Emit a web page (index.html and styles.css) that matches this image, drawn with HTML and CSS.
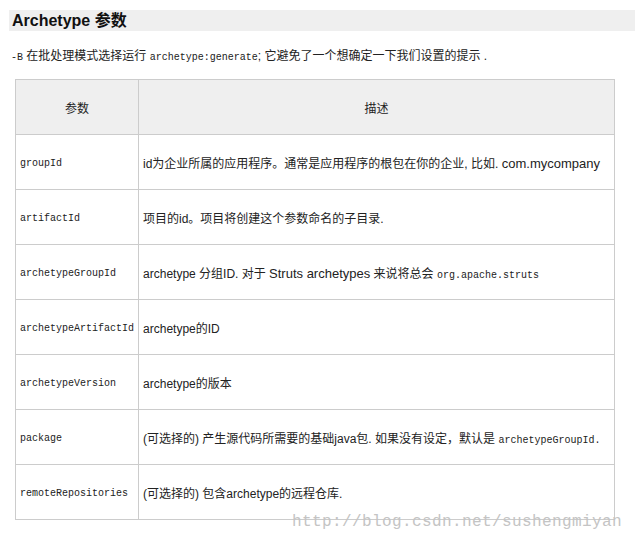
FILE: index.html
```html
<!DOCTYPE html>
<html lang="zh-CN">
<head>
    <meta charset="UTF-8">
    <title>Archetype 参数</title>
    <link rel="stylesheet" href="styles.css">
</head>
<body>
    <div class="page">
        <h3 class="section-title">Archetype 参数</h3>
        <p class="intro"><code>-B</code> 在批处理模式选择运行 <code>archetype:generate</code>; 它避免了一个想确定一下我们设置的提示 .</p>

        <table class="params">
            <thead>
                <tr>
                    <th class="col-name">参数</th>
                    <th>描述</th>
                </tr>
            </thead>
            <tbody>
                <tr>
                    <td><code>groupId</code></td>
                    <td>id为企业所属的应用程序。通常是应用程序的根包在你的企业, 比如. <span class="latin">com.mycompany</span></td>
                </tr>
                <tr>
                    <td><code>artifactId</code></td>
                    <td>项目的id。项目将创建这个参数命名的子目录.</td>
                </tr>
                <tr>
                    <td><code>archetypeGroupId</code></td>
                    <td>archetype 分组ID. 对于 <span class="latin">Struts archetypes</span> 来说将总会 <code>org.apache.struts</code></td>
                </tr>
                <tr>
                    <td><code>archetypeArtifactId</code></td>
                    <td>archetype的ID</td>
                </tr>
                <tr>
                    <td><code>archetypeVersion</code></td>
                    <td>archetype的版本</td>
                </tr>
                <tr>
                    <td><code>package</code></td>
                    <td>(可选择的) 产生源代码所需要的基础java包. 如果没有设定，默认是 <code>archetypeGroupId.</code></td>
                </tr>
                <tr>
                    <td><code>remoteRepositories</code></td>
                    <td>(可选择的) 包含archetype的远程仓库.</td>
                </tr>
            </tbody>
        </table>

        <div class="watermark">http://blog.csdn.net/sushengmiyan</div>
    </div>
</body>
</html>
```

FILE: styles.css
```css
body {
    margin: 0;
    background-color: #fff;
    color: #222;
    font-family: "Liberation Sans", "Noto Sans CJK SC", sans-serif;
    font-size: 12px;
}

.page {
    position: relative;
    padding: 10px 0 0 9px;
    height: 534px;
    overflow: hidden;
}

code {
    font-family: "Liberation Mono", "Noto Sans CJK SC", monospace;
    font-size: 10px;
    color: #222;
}

.latin {
    font-size: 13px;
}

.section-title {
    margin: 0;
    height: 21px;
    line-height: 21px;
    padding-left: 3px;
    background-color: #efefef;
    font-size: 16px;
    font-weight: bold;
    color: #111;
}

.intro {
    margin: 17px 0 0 2px;
    line-height: 16px;
    white-space: nowrap;
}

.params {
    margin: 13px 0 0 6px;
    width: 600px;
    border-collapse: collapse;
    border: 1px solid #cccccc;
}

.params th,
.params td {
    height: 54px;
    padding: 0 4px;
    border: 1px solid #cccccc;
    white-space: nowrap;
    text-align: left;
    vertical-align: middle;
}

.params th {
    background-color: #efefef;
    font-weight: normal;
    text-align: center;
}

.params .col-name {
    width: 114px;
}

.watermark {
    position: absolute;
    right: 13px;
    top: 513px;
    font-family: "Liberation Mono", monospace;
    font-size: 16px;
    color: #c4c4c4;
    letter-spacing: 0.4px;
}
```
